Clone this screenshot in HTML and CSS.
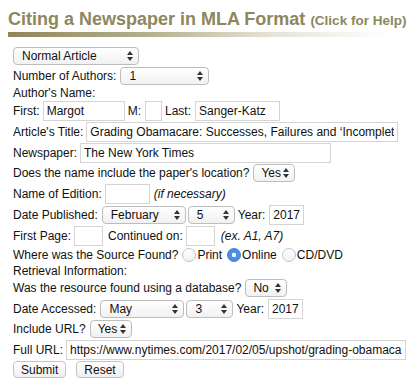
FILE: index.html
```html
<!DOCTYPE html>
<html lang="en">
<head>
  <meta charset="UTF-8">
  <meta name="viewport" content="width=device-width, initial-scale=1.0">
  <title>Citing a Newspaper in MLA Format</title>
  <link rel="stylesheet" href="styles.css">
</head>
<body>
  <h1 class="title">Citing a Newspaper in MLA Format <a href="#" class="help">(Click for Help)</a></h1>
  <div class="title-bar"></div>

  <form class="cite-form" onsubmit="return false">
    <div class="row r-top">
      <span class="sel w-type"><select><option>Normal Article</option></select></span>
    </div>
    <div class="row r-sel">
      <label>Number of Authors:</label>
      <span class="sel w-authors"><select><option>1</option></select></span>
    </div>
    <div class="row r-txt">Author's Name:</div>
    <div class="row r-inp">
      <label>First:</label>
      <input type="text" class="w-first" value="Margot">
      <label>M:</label>
      <input type="text" class="w-mid" value="">
      <label>Last:</label>
      <input type="text" class="w-last" value="Sanger-Katz">
    </div>
    <div class="row r-inp">
      <label>Article's Title:</label>
      <input type="text" class="w-title" value="Grading Obamacare: Successes, Failures and ‘Incomplete’">
    </div>
    <div class="row r-inp">
      <label>Newspaper:</label>
      <input type="text" class="w-paper" value="The New York Times">
    </div>
    <div class="row r-sel">
      <label>Does the name include the paper's location?</label>
      <span class="sel w-yes"><select><option>Yes</option></select></span>
    </div>
    <div class="row r-inp">
      <label>Name of Edition:</label>
      <input type="text" class="w-edition" value="">
      <em>(if necessary)</em>
    </div>
    <div class="row r-inp">
      <label>Date Published:</label>
      <span class="sel w-month"><select><option>February</option></select></span>
      <span class="sel w-day"><select><option>5</option></select></span>
      <label>Year:</label>
      <input type="text" class="w-year" value="2017">
    </div>
    <div class="row r-inp">
      <label>First Page:</label>
      <input type="text" class="w-page" value="">
      <label>Continued on:</label>
      <input type="text" class="w-page" value="">
      <em>(ex. A1, A7)</em>
    </div>
    <div class="row r-radio">
      <label>Where was the Source Found?</label>
      <span class="radio-group">
        <input type="radio" name="found"><span>Print</span>
        <input type="radio" name="found" checked><span>Online</span>
        <input type="radio" name="found"><span>CD/DVD</span>
      </span>
    </div>
    <div class="row r-txt">Retrieval Information:</div>
    <div class="row r-sel">
      <label>Was the resource found using a database?</label>
      <span class="sel w-yes"><select><option>No</option></select></span>
    </div>
    <div class="row r-inp">
      <label>Date Accessed:</label>
      <span class="sel w-month"><select><option>May</option></select></span>
      <span class="sel w-day"><select><option>3</option></select></span>
      <label>Year:</label>
      <input type="text" class="w-year" value="2017">
    </div>
    <div class="row r-sel">
      <label>Include URL?</label>
      <span class="sel w-yes"><select><option>Yes</option></select></span>
    </div>
    <div class="row r-inp">
      <label>Full URL:</label>
      <input type="text" class="w-url" value="https://www.nytimes.com/2017/02/05/upshot/grading-obamacare.html">
    </div>
    <div class="row r-btn">
      <button type="submit">Submit</button>
      <button type="reset">Reset</button>
    </div>
  </form>
</body>
</html>
```

FILE: styles.css
```css
body {
  margin: 8px;
  background: #fff;
  color: #111;
  font-family: "Liberation Sans", Arial, sans-serif;
  font-size: 12px;
}

.title {
  margin: 0;
  font-size: 18px;
  line-height: 22px;
  color: #8d8760;
  font-weight: bold;
  white-space: nowrap;
}
.help {
  font-size: 13.5px;
  color: #8d8760;
  text-decoration: none;
}
.title-bar {
  height: 5px;
  width: 380px;
  background: linear-gradient(to right, #8f875a 0%, #b3ad8a 35%, #e6e4d8 70%, #fff 100%);
}

.cite-form {
  margin-top: 9px;
  padding-left: 5px;
}
.row {
  display: flex;
  align-items: center;
  gap: 3px;
  white-space: nowrap;
}
.r-top { height: 20px; }
.r-sel { height: 20px; }
.r-txt { height: 14px; }
.r-inp { height: 21px; }
.r-radio { height: 18px; }
.r-btn { height: 19px; gap: 10px; }

em {
  font-style: italic;
  margin-left: 1px;
}

input[type="text"] {
  box-sizing: border-box;
  height: 20px;
  margin: 0;
  padding: 0 3px;
  border: 1px solid #d4d4d4;
  background: #fff;
  font-family: "Liberation Sans", Arial, sans-serif;
  font-size: 12px;
  color: #111;
  outline: none;
}
.w-first { width: 82px; }
.w-mid { width: 17px; margin-left: 1px !important; }
.w-last { width: 85px; margin-left: 1px !important; }
.w-title { width: 312px; }
.w-paper { width: 251px; }
.w-edition { width: 45px; }
.w-year { width: 35px; margin-left: 1px !important; }
.w-page { width: 29px; margin-right: 2px !important; }
.w-url { width: 340px; }

.sel {
  position: relative;
  display: inline-block;
  height: 18px;
}
.sel select {
  appearance: none;
  -webkit-appearance: none;
  box-sizing: border-box;
  width: 100%;
  height: 18px;
  margin: 0;
  padding: 0 10px 0 8px;
  border: 1px solid #bdbdbd;
  border-radius: 4px;
  background: linear-gradient(#ffffff, #f1f1f1);
  font-family: "Liberation Sans", Arial, sans-serif;
  font-size: 12px;
  color: #111;
}
.sel::before,
.sel::after {
  content: "";
  position: absolute;
  right: 6px;
  border-left: 3px solid transparent;
  border-right: 3px solid transparent;
  pointer-events: none;
}
.sel::before {
  top: 4px;
  border-bottom: 4px solid #333;
}
.sel::after {
  top: 10px;
  border-top: 4px solid #333;
}
.w-type { width: 126px; }
.w-authors { width: 89px; margin-left: 1px; }
.w-yes { width: 42px; margin-left: 1px; }
.w-yes select { padding-left: 7px; padding-right: 8px; }
.w-month { width: 84px; margin-left: 1px; }
.w-day { width: 47px; margin-left: -1px; }

.radio-group {
  display: flex;
  align-items: center;
  gap: 0;
}
.radio-group input[type="radio"] {
  appearance: none;
  -webkit-appearance: none;
  box-sizing: border-box;
  width: 14px;
  height: 14px;
  margin: 0 1px 0 1px;
  border: 1px solid #c2c2c2;
  border-radius: 50%;
  background: linear-gradient(#fff, #f2f2f2);
}
.radio-group input[type="radio"]:checked {
  border-color: #3a80d8;
  background: radial-gradient(circle, #fff 0 2px, #4a8fe3 2.5px);
}
.radio-group span {
  margin-right: 4px;
}

button {
  box-sizing: border-box;
  height: 17px;
  margin: 0;
  padding: 0 7px;
  border: 1px solid #c4c4c4;
  border-radius: 4px;
  background: linear-gradient(#ffffff, #f0f0f0);
  font-family: "Liberation Sans", Arial, sans-serif;
  font-size: 12px;
  color: #111;
  cursor: pointer;
}
```
